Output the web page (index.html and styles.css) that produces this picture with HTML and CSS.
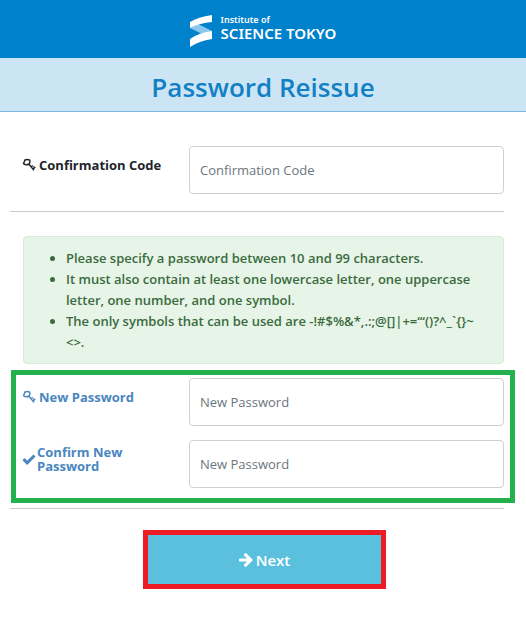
FILE: index.html
```
<!DOCTYPE html>
<html lang="en">
<head>
    <meta charset="UTF-8">
    <meta name="viewport" content="width=device-width, initial-scale=1.0">
    <title>Password Reissue</title>
    <link rel="stylesheet" href="styles.css">
</head>
<body>
    <!-- Shared key icon -->
    <svg class="sprite" aria-hidden="true">
        <symbol id="icon-key" viewBox="0 0 14 14">
            <path d="M1.6 5.6 L3 2 Q5 0.8 7.6 2 Q8.4 4 7 6 Q4 7.8 1.6 5.6Z M6.6 5.8 L12 12.4" fill="none" stroke="currentColor" stroke-width="1.5"/>
            <path d="M9.4 8.6 L10.8 7.4 M11 11 L13.4 9.2 M11.4 8.4 L12.8 10" fill="none" stroke="currentColor" stroke-width="1.3"/>
        </symbol>
    </svg>

    <!-- Header -->
    <header class="header">
        <svg class="logo-mark" viewBox="0 0 22 32" aria-hidden="true">
            <path d="M0 13 L8 9 L22 16 L14 20Z" fill="#8cc8ee"/>
            <path d="M0 13 V7 Q8 2 22 0 V7 Q10 8 0 13Z" fill="#fff"/>
            <path d="M0 32 V24 Q8 18 22 16 V24 Q9 26 0 32Z" fill="#fff"/>
        </svg>
        <div class="logo-text">
            <span class="logo-small">Institute of</span>
            <span class="logo-large">SCIENCE TOKYO</span>
        </div>
    </header>

    <h1 class="page-title">Password Reissue</h1>

    <form class="reissue-form">
        <div class="form-row form-row-code">
            <label class="form-label" for="code">
                <svg class="icon"><use href="#icon-key"/></svg>
                <span>Confirmation Code</span>
            </label>
            <input type="text" id="code" class="form-control" placeholder="Confirmation Code">
        </div>

        <hr class="divider">

        <div class="alert">
            <ul>
                <li>Please specify a password between 10 and 99 characters.</li>
                <li>It must also contain at least one lowercase letter, one uppercase letter, one number, and one symbol.</li>
                <li>The only symbols that can be used are -!#$%&amp;*,.:;@[]|+=‘“()?^_`{}~ &lt;&gt;.</li>
            </ul>
        </div>

        <div class="password-group">
            <div class="form-row">
                <label class="form-label label-blue" for="password">
                    <svg class="icon"><use href="#icon-key"/></svg>
                    <span>New Password</span>
                </label>
                <input type="password" id="password" class="form-control" placeholder="New Password">
            </div>
            <div class="form-row">
                <label class="form-label label-blue label-wrap" for="password-confirm">
                    <svg class="icon" viewBox="0 0 14 14" aria-hidden="true">
                        <path d="M1.5 7.2 L5.2 10.8 L12.5 3.5" fill="none" stroke="currentColor" stroke-width="3"/>
                    </svg>
                    <span>Confirm New Password</span>
                </label>
                <input type="password" id="password-confirm" class="form-control" placeholder="New Password">
            </div>
        </div>

        <hr class="divider">

        <div class="form-actions">
            <button type="button" class="btn-next">
                <svg class="icon" viewBox="0 0 14 14" aria-hidden="true">
                    <path d="M1.4 7 H11 M6.6 1.8 L11.8 7 L6.6 12.2" fill="none" stroke="currentColor" stroke-width="3.2" stroke-linecap="round"/>
                </svg>
                <span>Next</span>
            </button>
        </div>
    </form>
</body>
</html>
```
FILE: styles.css
```
* {
    margin: 0;
    padding: 0;
    box-sizing: border-box;
}

body {
    font-family: 'Open Sans', 'Noto Sans', sans-serif;
    font-size: 14px;
    color: #212529;
    background: #fff;
}

.sprite {
    display: none;
}

/* Header */
.header {
    display: flex;
    align-items: center;
    justify-content: center;
    gap: 9px;
    padding: 15px 0 11px;
    background: #0081cc;
    color: #fff;
}

.logo-mark {
    width: 22px;
    height: 32px;
}

.logo-text {
    display: flex;
    flex-direction: column;
    align-self: flex-start;
    font-family: 'Noto Sans', sans-serif;
    font-weight: 600;
}

.logo-small {
    font-size: 9px;
    line-height: 9px;
}

.logo-large {
    font-size: 15px;
    line-height: 18px;
}

.page-title {
    padding: 11px 0 6px;
    background: #cce5f5;
    border-bottom: 1px solid #80b9dc;
    color: #1180c4;
    font-size: 26px;
    font-weight: 600;
    line-height: 36px;
    text-align: center;
}

/* Form */
.reissue-form {
    padding: 34px 11px 34px 10px;
}

.form-row {
    display: grid;
    grid-template-columns: 167px 1fr;
}

.form-row-code {
    padding: 0 11px 0 12px;
}

.form-label {
    display: flex;
    align-items: center;
    align-self: start;
    gap: 3px;
    padding-top: 9px;
    font-size: 13px;
    font-weight: 700;
    line-height: 20px;
}

.label-blue {
    color: #4a86c0;
}

.label-wrap {
    gap: 1px;
    padding-top: 5px;
    padding-right: 40px;
    line-height: 14px;
}

.icon {
    flex: none;
    width: 14px;
    height: 14px;
}

.form-control {
    width: 100%;
    height: 48px;
    padding: 0 10px;
    border: 1px solid #ced0d2;
    border-radius: 4px;
    background: #fff;
    font-family: inherit;
    font-size: 13px;
    color: #495057;
}

.form-control::placeholder {
    color: #6c757d;
}

.divider {
    margin: 17px 11px 0 0;
    border: 0;
    border-top: 1px solid #ccc;
}

.alert {
    margin: 24px 11px 6px 13px;
    padding: 11px 12px 10px;
    border: 1px solid #d9ebda;
    border-radius: 4px;
    background: #e7f4e8;
    color: #3a6b3d;
    font-size: 13px;
    font-weight: 600;
    line-height: 21px;
}

.alert ul {
    padding-left: 30px;
}

.password-group {
    display: grid;
    gap: 14px;
    margin-left: 1px;
    padding: 3px 6px 10px;
    border: 5px solid #22b14c;
}

.password-group + .divider {
    margin-top: 5px;
}

.form-actions {
    padding: 21px 0 0 4px;
}

.btn-next {
    display: flex;
    align-items: center;
    justify-content: center;
    gap: 3px;
    width: 48%;
    min-width: 243px;
    height: 59px;
    margin: 0 auto;
    border: 5px solid #ed1c24;
    background: #5bc0de;
    color: #fff;
    font-family: inherit;
    font-size: 15px;
    font-weight: 600;
    cursor: pointer;
}
```
